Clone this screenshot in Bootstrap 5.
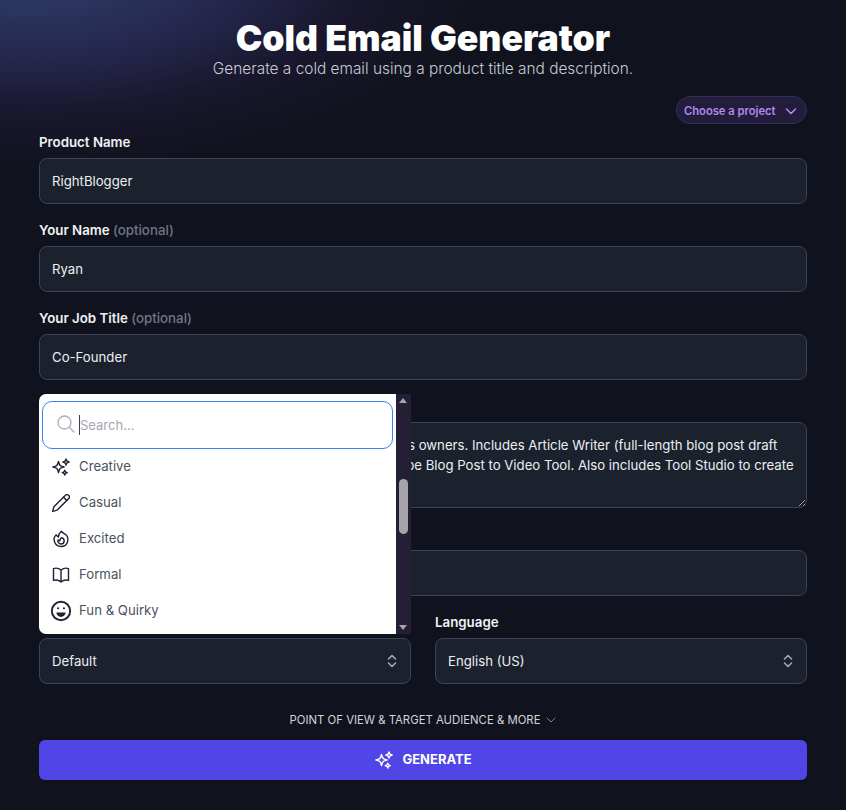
<!DOCTYPE html>
<html lang="en">
<head>
<meta charset="utf-8">
<title>Cold Email Generator</title>
<link href="https://cdn.jsdelivr.net/npm/bootstrap@5.3.0/dist/css/bootstrap.min.css" rel="stylesheet">
<style>
html,body{height:100%}
body{font-family:Inter,"Noto Sans",sans-serif;font-size:14px;color:#e5e7eb;overflow:hidden;
 background:
  radial-gradient(ellipse 460px 200px at 30px -30px,rgba(52,72,120,.85) 0%,rgba(50,50,105,.62) 45%,rgba(42,30,75,.35) 72%,rgba(15,18,28,0) 100%),
  #10131d}
.page-wrap{padding:21px 39px 0}
.tool-title{font-size:35.6px;line-height:36px;font-weight:900;color:#fff;margin:0 0 1px;letter-spacing:0}
.tool-sub{font-size:15.4px;line-height:22px;font-weight:300;color:#c9ccd3;margin:0 0 16px}
.proj-pill{height:28px;width:131px;border-radius:14px;background:#231d3c;border:1px solid #352d5c;color:#b587f0;font-size:11.2px;font-weight:600;padding:2px 0 0 7px;margin-bottom:8px}
.fld-label{font-size:13.3px;line-height:20px;font-weight:600;color:#f0f1f4;margin-bottom:6px;display:block}
.fld-label span{font-weight:500;color:#6f7688}
.fld{margin-bottom:16px;position:relative}
.form-control.dark-in,.form-select.dark-in{height:46px;background-color:#1b222d;border:1px solid #3b4458;border-radius:8px;color:#eceef2;font-size:13.2px;padding:0 12px;box-shadow:none}
.form-control.dark-area{height:86px;min-height:86px;padding:12px 12px;line-height:20px}
.form-select.dark-in{padding-top:2px;background-image:url("data:image/svg+xml,%3Csvg xmlns='http://www.w3.org/2000/svg' viewBox='0 0 10 14' fill='none' stroke='%23a3a8b6' stroke-width='1.6' stroke-linecap='round' stroke-linejoin='round'%3E%3Cpath d='M1.5 5L5 1.5 8.5 5M1.5 9L5 12.5 8.5 9'/%3E%3C/svg%3E");background-size:10px 14px;background-position:right 13px center;background-repeat:no-repeat}
.tone-pop{position:absolute;left:0;right:0;bottom:calc(100% + 4px);height:240px;background:#fff;border-radius:7px 0 0 7px;display:flex;z-index:10}
.tone-body{flex:1;min-width:0;padding:7px 3px 0}
.tone-search{position:relative}
.tone-search input{height:48px;border:1px solid #3b82f6;border-radius:10px;padding-left:37px;font-size:13px;box-shadow:none}
.tone-search input::placeholder{color:#a3a8b1}
.tone-search svg{position:absolute;left:14px;top:13px}
.tone-caret{position:absolute;left:37px;top:14px;width:1px;height:20px;background:#374151}
.tone-row{height:36px;padding-left:9px;color:#4b5160;font-size:13.2px;font-weight:400;gap:8px}
.tone-row svg{flex:none}
.tone-row svg.face-ic{margin:0 -1px}
.tone-bar{width:15px;background:#251f35;display:flex;flex-direction:column;align-items:center;position:relative}
.tone-thumb{position:absolute;left:3px;top:85px;width:9px;height:55px;border-radius:5px;background:#a5a5a9}
.arr-up,.arr-dn{width:0;height:0;border-left:4.5px solid transparent;border-right:4.5px solid transparent;position:absolute;left:3px}
.arr-up{top:4px;border-bottom:5px solid #a5a5a9}
.arr-dn{bottom:4px;border-top:5px solid #a5a5a9}
.more-link{font-size:11.35px;line-height:20px;color:#d1d4da;font-weight:400;margin:26px 0 10px;gap:6px}
.gen-btn{height:40px;background:#4f46e5;border:0;border-radius:6px;color:#fff;font-size:13px;font-weight:700;gap:8px}
.gen-btn:hover{background:#4f46e5;color:#fff}
</style>
</head>
<body>
<div class="page-wrap">
  <header class="text-center">
    <h1 class="tool-title">Cold Email Generator</h1>
    <p class="tool-sub">Generate a cold email using a product title and description.</p>
  </header>
  <div class="d-flex justify-content-end">
    <button type="button" class="proj-pill d-flex align-items-center justify-content-between">
      <span>Choose a project</span>
      <svg class="me-2" width="14" height="14" viewBox="0 0 14 14" fill="none" stroke="#b587f0" stroke-width="1.6" stroke-linecap="round" stroke-linejoin="round"><path d="M2.5 5l4.5 4.5L11.5 5"/></svg>
    </button>
  </div>
  <form>
    <div class="fld">
      <label class="fld-label">Product Name</label>
      <input class="form-control dark-in" value="RightBlogger">
    </div>
    <div class="fld">
      <label class="fld-label">Your Name <span>(optional)</span></label>
      <input class="form-control dark-in" value="Ryan">
    </div>
    <div class="fld">
      <label class="fld-label">Your Job Title <span>(optional)</span></label>
      <input class="form-control dark-in" value="Co-Founder">
    </div>
    <div class="fld">
      <label class="fld-label">&nbsp;</label>
      <textarea class="form-control dark-in dark-area">RightBlogger is an AI content suite for blogs, and business owners. Includes Article Writer (full-length blog post draft generators), the YouTube to Blog Post Tool and an YouTube Blog Post to Video Tool. Also includes Tool Studio to create custom AI tools.</textarea>
    </div>
    <div class="fld">
      <label class="fld-label">&nbsp;</label>
      <input class="form-control dark-in" value="">
    </div>
    <div class="row g-0 fld" style="column-gap:24px">
      <div class="col">
        <label class="fld-label">&nbsp;</label>
        <div class="position-relative">
          <select class="form-select dark-in"><option>Default</option></select>
          <div class="tone-pop">
            <div class="tone-body">
              <div class="tone-search">
                <input class="form-control" placeholder="Search...">
                <svg width="20" height="20" viewBox="0 0 20 20" fill="none" stroke="#a8acb4" stroke-width="1.3" stroke-linecap="round"><circle cx="8.5" cy="8.5" r="6.5"/><path d="M13.3 13.3L18 18"/></svg>
                <span class="tone-caret"></span>
              </div>
              <div class="tone-row d-flex align-items-center">
                <svg width="20" height="20" viewBox="0 0 24 24" fill="none" stroke="#1f2333" stroke-width="1.7" stroke-linecap="round" stroke-linejoin="round"><path d="M9.813 15.904L9 18.75l-.813-2.846a4.5 4.5 0 00-3.09-3.09L2.25 12l2.846-.813a4.5 4.5 0 003.09-3.09L9 5.25l.813 2.846a4.5 4.5 0 003.09 3.09L15.75 12l-2.846.813a4.5 4.5 0 00-3.09 3.09zM18.259 8.715L18 9.75l-.259-1.035a3.375 3.375 0 00-2.455-2.456L14.25 6l1.036-.259a3.375 3.375 0 002.455-2.456L18 2.25l.259 1.035a3.375 3.375 0 002.456 2.456L21.75 6l-1.035.259a3.375 3.375 0 00-2.456 2.456zM16.894 20.567L16.5 21.75l-.394-1.183a2.25 2.25 0 00-1.423-1.423L13.5 18.75l1.183-.394a2.25 2.25 0 001.423-1.423l.394-1.183.394 1.183a2.25 2.25 0 001.423 1.423l1.183.394-1.183.394a2.25 2.25 0 00-1.423 1.423z"/></svg>
                <span>Creative</span>
              </div>
              <div class="tone-row d-flex align-items-center">
                <svg width="20" height="20" viewBox="0 0 24 24" fill="none" stroke="#1f2333" stroke-width="1.7" stroke-linecap="round" stroke-linejoin="round"><path d="M17 3a2.85 2.83 0 1 1 4 4L7.5 20.5 2 22l1.5-5.5Z"/><path d="m15 5 4 4"/></svg>
                <span>Casual</span>
              </div>
              <div class="tone-row d-flex align-items-center">
                <svg width="20" height="20" viewBox="0 0 24 24" fill="none" stroke="#1f2333" stroke-width="1.7" stroke-linecap="round" stroke-linejoin="round"><path d="M15.362 5.214A8.252 8.252 0 0112 21 8.25 8.25 0 016.038 7.048 8.287 8.287 0 009 9.6a8.983 8.983 0 013.361-6.867 8.21 8.21 0 003 2.48z"/><path d="M12 18a3.75 3.75 0 00.495-7.467 5.99 5.99 0 00-1.925 3.546 5.974 5.974 0 01-2.133-1A3.75 3.75 0 0012 18z"/></svg>
                <span>Excited</span>
              </div>
              <div class="tone-row d-flex align-items-center">
                <svg width="20" height="20" viewBox="0 0 24 24" fill="none" stroke="#1f2333" stroke-width="1.7" stroke-linecap="round" stroke-linejoin="round"><path d="M12 6.042A8.967 8.967 0 006 3.75c-1.052 0-2.062.18-3 .512v14.25A8.987 8.987 0 016 18c2.305 0 4.408.867 6 2.292m0-14.25a8.966 8.966 0 016-2.292c1.052 0 2.062.18 3 .512v14.25A8.987 8.987 0 0018 18a8.967 8.967 0 00-6 2.292m0-14.25v14.25"/></svg>
                <span>Formal</span>
              </div>
              <div class="tone-row d-flex align-items-center">
                <svg class="face-ic" width="22" height="22" viewBox="0 0 24 24" fill="none" stroke="#1f2333" stroke-width="2.1" stroke-linecap="round" stroke-linejoin="round"><circle cx="12" cy="12" r="10"/><circle cx="8.8" cy="9" r="1.2" fill="#1f2333" stroke="none"/><circle cx="15.2" cy="9" r="1.2" fill="#1f2333" stroke="none"/><path d="M7 13.5h10a5 5 0 0 1-10 0z" fill="#1f2333" stroke="none"/></svg>
                <span>Fun &amp; Quirky</span>
              </div>
            </div>
            <div class="tone-bar"><i class="arr-up"></i><i class="tone-thumb"></i><i class="arr-dn"></i></div>
          </div>
        </div>
      </div>
      <div class="col">
        <label class="fld-label">Language</label>
        <select class="form-select dark-in"><option>English (US)</option></select>
      </div>
    </div>
    <div class="more-link d-flex align-items-center justify-content-center">
      <span>POINT OF VIEW &amp; TARGET AUDIENCE &amp; MORE</span>
      <svg width="10" height="10" viewBox="0 0 10 10" fill="none" stroke="#7c8290" stroke-width="1" stroke-linecap="round" stroke-linejoin="round"><path d="M1 3l4 4 4-4"/></svg>
    </div>
    <button type="button" class="btn gen-btn w-100 d-flex align-items-center justify-content-center">
      <svg width="20" height="20" viewBox="0 0 24 24" fill="none" stroke="#fff" stroke-width="1.7" stroke-linecap="round" stroke-linejoin="round"><path d="M9.813 15.904L9 18.75l-.813-2.846a4.5 4.5 0 00-3.09-3.09L2.25 12l2.846-.813a4.5 4.5 0 003.09-3.09L9 5.25l.813 2.846a4.5 4.5 0 003.09 3.09L15.75 12l-2.846.813a4.5 4.5 0 00-3.09 3.09zM18.259 8.715L18 9.75l-.259-1.035a3.375 3.375 0 00-2.455-2.456L14.25 6l1.036-.259a3.375 3.375 0 002.455-2.456L18 2.25l.259 1.035a3.375 3.375 0 002.456 2.456L21.75 6l-1.035.259a3.375 3.375 0 00-2.456 2.456zM16.894 20.567L16.5 21.75l-.394-1.183a2.25 2.25 0 00-1.423-1.423L13.5 18.75l1.183-.394a2.25 2.25 0 001.423-1.423l.394-1.183.394 1.183a2.25 2.25 0 001.423 1.423l1.183.394-1.183.394a2.25 2.25 0 00-1.423 1.423z"/></svg>
      <span>GENERATE</span>
    </button>
  </form>
</div>
<script src="https://cdn.jsdelivr.net/npm/bootstrap@5.3.0/dist/js/bootstrap.bundle.min.js"></script>
</body>
</html>
